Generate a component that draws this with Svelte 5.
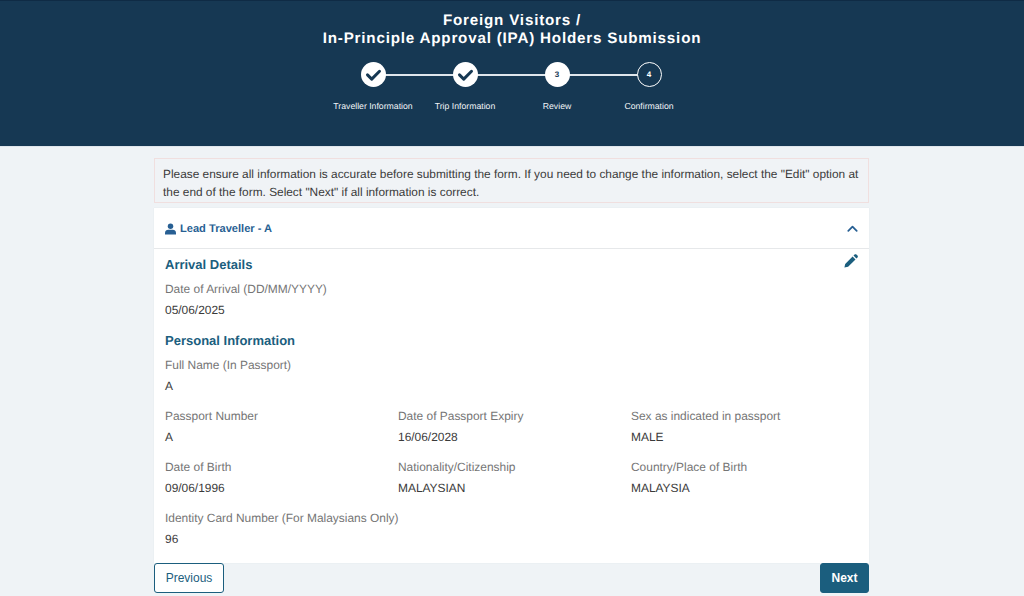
<script>
  const steps = [
    { label: 'Traveller Information', state: 'done' },
    { label: 'Trip Information', state: 'done' },
    { label: 'Review', state: 'current', n: 3 },
    { label: 'Confirmation', state: 'todo', n: 4 }
  ];
  const rows = [
    [{ l: 'Full Name (In Passport)', v: 'A' }],
    [
      { l: 'Passport Number', v: 'A' },
      { l: 'Date of Passport Expiry', v: '16/06/2028' },
      { l: 'Sex as indicated in passport', v: 'MALE' }
    ],
    [
      { l: 'Date of Birth', v: '09/06/1996' },
      { l: 'Nationality/Citizenship', v: 'MALAYSIAN' },
      { l: 'Country/Place of Birth', v: 'MALAYSIA' }
    ],
    [{ l: 'Identity Card Number (For Malaysians Only)', v: '96' }]
  ];
</script>

<div class="page">
  <header class="hero">
    <h1>Foreign Visitors /<br />In-Principle Approval (IPA) Holders Submission</h1>
    <ol class="steps">
      {#each steps as s}
        <li class="step">
          <span class="dot {s.state}">
            {#if s.state === 'done'}
              <svg viewBox="0 0 24 24" width="17" height="17" aria-hidden="true">
                <path d="M3.5 12.5 9.5 18.5 20.5 7.5" fill="none" stroke="#163853" stroke-width="4.2" stroke-linecap="round" stroke-linejoin="round" />
              </svg>
            {:else}
              {s.n}
            {/if}
          </span>
          <span class="step-label">{s.label}</span>
        </li>
      {/each}
    </ol>
  </header>

  <main class="wrap">
    <p class="notice">
      Please ensure all information is accurate before submitting the form. If you need to change the information, select the "Edit" option at the end of the form. Select "Next" if all information is correct.
    </p>

    <section class="card">
      <div class="card-head">
        <svg class="user" viewBox="0 0 14 14" width="11" height="12" aria-hidden="true">
          <circle cx="7" cy="3.6" r="3.5" fill="#275f93" />
          <path d="M0 14v-2.2C0 9.4 2 8 4 8h6c2 0 4 1.4 4 3.8V14z" fill="#275f93" />
        </svg>
        <span class="who">Lead Traveller - A</span>
        <svg class="chev" viewBox="0 0 12 8" width="11" height="7" aria-hidden="true">
          <path d="M1.2 6.6 6 1.8l4.8 4.8" fill="none" stroke="#275f93" stroke-width="2" stroke-linecap="round" stroke-linejoin="round" />
        </svg>
      </div>
      <div class="card-body">
        <svg class="edit" viewBox="0 0 14 14" width="14" height="14" aria-hidden="true">
          <path d="M0.4 13.6 1.2 9.9 8.6 2.5 11.5 5.4 4.1 12.8Z M9.5 1.6 10.6 0.5C11.1 0 11.9 0 12.4 0.5L13.5 1.6C14 2.1 14 2.9 13.5 3.4L12.4 4.5Z" fill="#1b5e7e" />
        </svg>
        <h2>Arrival Details</h2>
        <div class="field first">
          <div class="label">Date of Arrival (DD/MM/YYYY)</div>
          <div class="value">05/06/2025</div>
        </div>
        <h2 class="second">Personal Information</h2>
        {#each rows as row, i}
          <div class="row" class:first={i === 0}>
            {#each row as f}
              <div class="field">
                <div class="label">{f.l}</div>
                <div class="value">{f.v}</div>
              </div>
            {/each}
          </div>
        {/each}
      </div>
    </section>

    <div class="actions">
      <button class="btn prev" type="button">Previous</button>
      <button class="btn next" type="button">Next</button>
    </div>
  </main>
</div>

<style>
  :global(body) {
    margin: 0;
    background: #eff3f6;
  }
  .page {
    height: 596px;
    overflow: hidden;
    font-family: "Liberation Sans", Arial, sans-serif;
    text-rendering: geometricPrecision;
    color: #333;
  }
  .hero {
    box-sizing: border-box;
    height: 147px;
    padding-top: 11px;
    background: #163853;
    border-top: 1px solid #0f2b45;
    border-bottom: 1px solid #dfe6ec;
    color: #fff;
  }
  h1 {
    margin: 0;
    font-size: 15.2px;
    line-height: 18px;
    font-weight: 700;
    letter-spacing: 0.8px;
    text-align: center;
  }
  .steps {
    list-style: none;
    margin: 14px 2px 0 0;
    padding: 0;
    display: flex;
    justify-content: center;
  }
  .step {
    position: relative;
    width: 92px;
    display: flex;
    flex-direction: column;
    align-items: center;
  }
  .step:not(:last-child)::after {
    content: "";
    position: absolute;
    left: 46px;
    top: 12px;
    width: 92px;
    height: 1.5px;
    background: #dfe6ec;
  }
  .dot {
    position: relative;
    z-index: 1;
    box-sizing: border-box;
    width: 25px;
    height: 25px;
    border-radius: 50%;
    display: flex;
    align-items: center;
    justify-content: center;
    font-size: 8px;
    font-weight: 700;
    background: #fff;
    color: #163853;
  }
  .dot.todo {
    background: #163853;
    border: 1.5px solid #fff;
    color: #fff;
  }
  .step-label {
    margin-top: 13px;
    font-size: 8.7px;
    line-height: 12px;
    white-space: nowrap;
    color: #f2f5f8;
  }
  .wrap {
    width: 715px;
    margin: 11px 0 0 154px;
  }
  .notice {
    box-sizing: border-box;
    height: 45px;
    margin: 0;
    padding: 7px 6px 0 8px;
    font-size: 11.87px;
    line-height: 17.5px;
    color: #3a3a3a;
    background: #f0f3f6;
    border: 1px solid #f0dfdf;
  }
  .card {
    margin-top: 5px;
    background: #fff;
    box-shadow: 0 0 1px rgba(30, 60, 90, 0.1);
  }
  .card-head {
    box-sizing: border-box;
    height: 41px;
    padding: 1px 11px 0;
    display: flex;
    align-items: center;
    border-bottom: 1px solid #e6e8ea;
  }
  .who {
    margin-left: 4px;
    font-size: 11.1px;
    font-weight: 700;
    color: #275f93;
  }
  .chev {
    margin-left: auto;
  }
  .card-body {
    position: relative;
    box-sizing: border-box;
    height: 314px;
    padding: 8px 11px 0;
  }
  .edit {
    position: absolute;
    right: 11px;
    top: 5px;
  }
  h2 {
    margin: 0;
    font-size: 13px;
    line-height: 15px;
    font-weight: 700;
    color: #1b5e7e;
  }
  h2.second {
    margin-top: 15px;
  }
  .field.first {
    margin-top: 10px;
  }
  .row {
    display: grid;
    grid-template-columns: 233px 233px 1fr;
    margin-top: 15px;
  }
  .row.first {
    margin-top: 10px;
  }
  .label {
    font-size: 11.95px;
    line-height: 15px;
    color: #757575;
    white-space: nowrap;
  }
  .value {
    margin-top: 6px;
    font-size: 11.95px;
    line-height: 15px;
    color: #3a3a3a;
  }
  .actions {
    display: flex;
    justify-content: space-between;
  }
  .btn {
    box-sizing: border-box;
    height: 30px;
    border-radius: 3px;
    font-family: inherit;
    font-size: 12px;
    padding: 0;
  }
  .prev {
    width: 70px;
    background: #fff;
    border: 1.5px solid #1b5e7e;
    color: #1b5e7e;
  }
  .next {
    width: 49px;
    background: #1b5e7e;
    border: 1px solid #1b5e7e;
    color: #fff;
    font-weight: 700;
  }
</style>
